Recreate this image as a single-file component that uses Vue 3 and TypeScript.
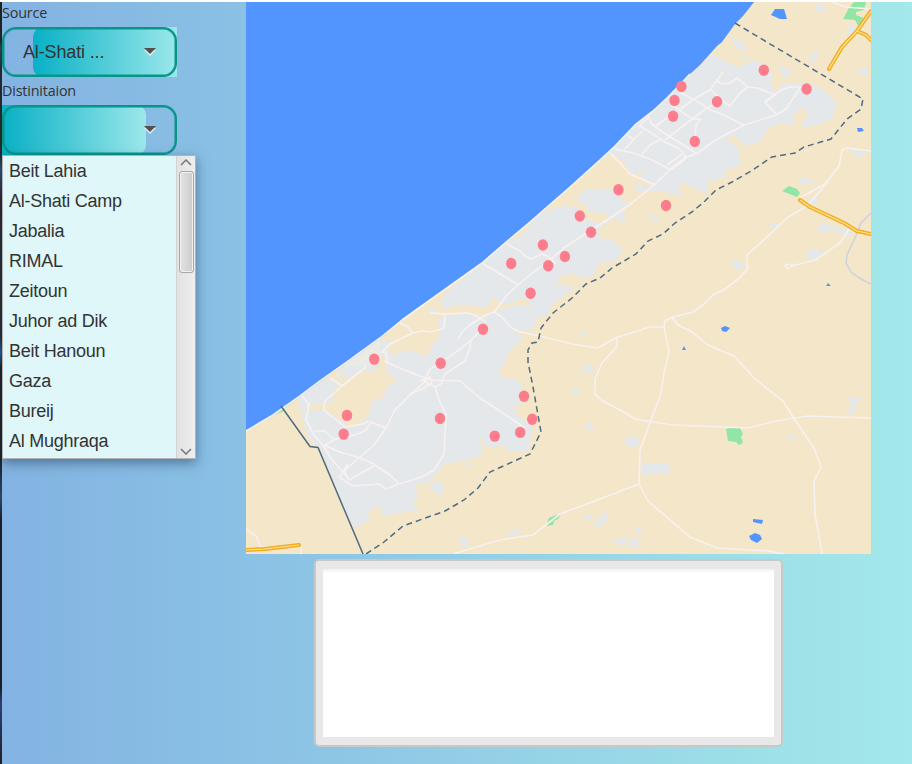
<script setup lang="ts">
import { ref } from 'vue'

interface Point {
  x: number
  y: number
}

const source = ref('Al-Shati ...')
const places: string[] = [
  'Beit Lahia',
  'Al-Shati Camp',
  'Jabalia',
  'RIMAL',
  'Zeitoun',
  'Juhor ad Dik',
  'Beit Hanoun',
  'Gaza',
  'Bureij',
  'Al Mughraqa',
]

const cities: Point[] = [
  { x: 763.8, y: 70.3 }, { x: 806.6, y: 89 }, { x: 681.4, y: 86.5 }, { x: 674.5, y: 100.5 },
  { x: 673.1, y: 116.3 }, { x: 717, y: 101.7 }, { x: 694.8, y: 141.5 }, { x: 618.5, y: 189.7 },
  { x: 666, y: 205.5 }, { x: 579.8, y: 216 }, { x: 591, y: 232.2 }, { x: 542.9, y: 245 },
  { x: 564.9, y: 256.5 }, { x: 548.2, y: 265.7 }, { x: 511.2, y: 263.5 }, { x: 530.6, y: 293.2 },
  { x: 483, y: 329.3 }, { x: 440.7, y: 363.2 }, { x: 374.2, y: 359.1 }, { x: 347, y: 415.4 },
  { x: 343.7, y: 434.1 }, { x: 440, y: 418.5 }, { x: 524, y: 396.2 }, { x: 532.2, y: 419.2 },
  { x: 520.2, y: 432.4 }, { x: 494.7, y: 436.1 },
]

const urban: string[] = [
  '713,54 727,62 740,68 747,63 760,61 772,72 770,83 777,92 783,83 800,83 817,86 827,93 837,103 833,118 817,125 800,128 804,121 808,115 803,107 795,112 793,125 780,123 768,128 760,142 745,146 733,135 726,138 739,149 741,165 725,170 725,177 708,182 707,194 700,191 683,182 678,190 685,197 660,191 637,192 636,183 650,187 655,184 640,177 643,172 632,175 622,160 610,153 615,146 635,125 650,113 668,97 690,74',
  '583,190 613,190 621,199 630,204 610,218 605,213 588,212 587,205 577,202',
  '482,263 505,244 517,235 516,242 530,225 540,214 563,206 577,207 588,220 600,224 610,218 612,220 597,231 603,240 612,238 616,244 623,249 617,260 598,264 593,276 580,278 575,274 562,275 555,284 575,287 550,307 549,314 536,318 533,330 513,331 502,315 493,312 507,307 517,305 529,305 534,315 529,301 520,298 513,303 502,303 493,297 488,307 455,305 445,310 440,303 444,295',
  '380,342 393,340 388,348 390,355 407,350 427,356 432,345 440,337 438,322 442,317 467,313 482,317 493,313 502,317 513,330 523,338 508,353 505,363 498,372 507,380 513,377 522,385 523,402 514,408 517,415 533,427 528,451 508,451 502,445 488,448 479,436 483,452 475,458 445,464 433,478 427,484 416,483 417,498 413,504 420,510 400,513 383,516 380,506 368,512 370,520 355,528 348,518 320,448 308,437 300,410 299,398 320,382 330,378 342,383 347,376 335,377 347,364 375,365 378,353',
  '430,307 440,312 434,315 430,313',
  '614,216 622,210 628,220 617,222',
  '645,213 660,218 656,223', '730,38 740,40 748,51 738,49', '740,55 751,58 745,61',
  '779,64 792,72 784,80', '808,60 818,48 816,63', '855,71 867,67 867,76',
  '817,4 826,5 823,12 816,11', '848,25 858,27 848,36', '850,150 868,152 858,158',
  '801,177 814,181 813,184 799,183', '807,200 817,194 817,203 808,203',
  '768,223 780,224 773,229', '731,263 738,260 744,266 737,271', '807,249 824,251 815,260 806,257',
  '815,228 824,225 822,221 830,226 838,226 824,233', '830,230 850,228 852,237 837,233',
  '847,397 861,398 855,408 852,415 846,411 852,406', '786,434 796,437 793,441',
  '623,443 632,435 639,440 637,449', '641,464 669,463 669,473 641,475',
  '600,516 608,512 607,521 599,518', '595,522 607,523 597,527',
  '610,542 625,536 625,546', '627,543 634,537 641,543 633,548', '636,525 643,531 635,536',
  '583,366 587,363 595,370 583,374', '569,389 581,389 576,397', '584,428 590,421 594,431',
  '578,337 585,331 588,335', '464,461 472,465 469,468', '429,485 440,480 445,490 439,496',
  '458,538 466,537 470,543 463,548', '508,532 520,528 521,532 511,537',
  '582,518 593,513 590,521', '593,526 597,518 607,523',
]

const roads: string[] = [
  'M246 431 273 415 300 396 320 381 347 362 380 338 402 320 430 300 482 263 505 243 530 222 570 187 600 160 615 146 635 125 653 111 668 97 690 74',
  'M458 339 462 332 470 325 482 317 495 311 507 295 518 285 531 274 550 260 565 247 582 236 610 218 632 203 655 184 675 165 687 157 698 153 714 141 744 125 776 115 786 109 800 88',
  'M648 116 652 124 661 131 680 143 697 154',
  'M615 149 637 154 650 159 671 170 684 160 685 155 678 148 665 142 656 136 640 126',
  'M627 135 633 139M625 149 636 137 643 131M648 118 638 127',
  'M642 154 650 145 661 139M667 165 682 154M656 126 676 111M665 140 692 119 707 108 720 102',
  'M678 91 700 103 710 110 724 115 744 125M672 105 692 119 701 119 696 125 695 141M679 110 694 99 710 90 723 72',
  'M717 81 722 84 730 83 737 78 741 81 748 87 740 93 730 106 720 99 711 90',
  'M748 87 758 88 775 95 765 102 777 115M765 102 781 90 790 87 801 87',
  'M610 153 620 163 630 174 642 179 655 185',
  'M505 243 520 251 525 256 531 259 542 254 549 257 556 264M482 263 502 275 518 285',
  'M430 313 445 314 467 313 475 315 486 322M493 312 501 316 512 328 520 332 540 336 572 344 598 348 615 338 650 327 664 327M445 314 444 328 438 330 430 332 423 331 413 333 390 344 382 352',
  'M400 323 408 327 413 333M381 352 386 352 387 362M384 361 402 369 420 376 431 380 460 381 480 398 503 413 525 428',
  'M482 329 471 340 470 348 465 361 445 374 441 384 435 387 424 381 430 369 440 363 459 350 471 340',
  'M435 387 439 400 446 415 444 454 434 470 422 477 399 484 386 489 379 484 353 486 339 477 346 469 374 445 386 428 395 410 412 393 428 379',
  'M324 445 340 452 360 458 370 462 390 475 399 484M374 466 349 480 344 470 348 464',
  'M302 396 309 404 306 420 314 435 323 445 330 457 348 478',
  'M323 446 336 439 358 434 366 430 371 422 386 428M366 367 342 386 324 402 324 410 345 427 363 424 369 421M330 378 343 386M314 431 324 431 334 439',
  'M420 381 430 377 432 382 424 388 411 394',
  'M829 180 820 191 807 206 788 217 765 239 747 255 747 270 737 280 725 289 713 295 704 304 693 312 673 317 665 321 664 327 669 352 664 373 661 394 651 420 640 450 639 484 648 501 690 537 717 548 768 551 784 554',
  'M800 198 825 184 839 166 842 150 847 148 871 151',
  'M849 229 840 243 815 260 800 264 793 265 788 269 785 265 790 264 793 267',
  'M672 317 678 325 692 332 708 345 734 356 755 379 783 401 799 426 814 448 821 467 814 481 815 514 822 554',
  'M617 338 617 346 602 363 595 379 595 394 601 400 620 410 635 419 647 421 673 425 748 428 776 421 808 416 835 417 871 418',
  'M453 554 500 540 533 535 560 514 600 499 639 484',
  'M246 529 256 536 261 548M301 546 301 554M832 2 845 7 871 9',
]

const highways: string[] = [
  'M829 69 842 47 857 31 871 11M857 31 866 35 871 40',
  'M800 200 810 207 844 223 857 231 871 234',
  'M246 550 265 549 299 545',
]
</script>

<template>
  <div class="app">
    <div class="edge"></div>
    <aside class="sidebar">
      <label class="label">Source</label>
      <div class="combo combo-source">
        <span class="value">{{ source }}</span>
        <svg class="arrow" viewBox="0 0 12 8"><path d="M0 2H12L6 8Z" fill="#e4eeee" /><path d="M0 0H12L6 6Z" fill="#53504f" /></svg>
      </div>
      <label class="label">Distinitaion</label>
      <div class="combo combo-target">
        <svg class="arrow" viewBox="0 0 12 8"><path d="M0 2H12L6 8Z" fill="#e4eeee" /><path d="M0 0H12L6 6Z" fill="#53504f" /></svg>
        <div class="popup">
          <ul class="list">
            <li v-for="place in places" :key="place">{{ place }}</li>
          </ul>
          <div class="scrollbar">
            <svg class="chevron" viewBox="0 0 12 7"><path d="M1 6 6 1 11 6" /></svg>
            <div class="thumb"></div>
            <svg class="chevron bottom" viewBox="0 0 12 7"><path d="M1 1 6 6 11 1" /></svg>
          </div>
        </div>
      </div>
    </aside>
    <main class="content">
      <svg class="map" viewBox="246 2 625 552">
        <rect x="246" y="2" width="625" height="552" fill="#f3e6c9" />
        <polygon v-for="(shape, i) in urban" :key="'u' + i" :points="shape" fill="#e4e8eb" />
        <path d="M347 363 380 339V350L378 363 366 366H343Z" fill="#e9ebe4" />
        <path d="M340 383 352 376 363 370 375 373 378 363 383 353 386 362 387 373 398 380 387 387 383 398 373 400 368 417 362 422 350 427 337 418 325 410 318 410 308 411 312 404 323 403 335 402 332 391Z" fill="#f3e6c9" />
        <path d="M246 2V431L273 416 300 397 320 382 347 363 380 339 402 320 416 309 430 300 444 290 482 263 505 243 530 222 570 187 600 160 615 146 635 125 653 111 668 97 690 74 700 65 717 46 722 42 735 24 743 16 754 2Z" fill="#5295ff" />
        <g fill="#5295ff">
          <path d="M771 15 775 9 784 9 787 19 780 19Z" />
          <path d="M857 128 862 128 864 131 858 132Z" />
          <path d="M721 328 725 326 730 328 726 332 722 331Z" />
          <path d="M828 283 831 286 826 286ZM684 346 686 350 682 350Z" />
          <path d="M753 519 763 520 762 524 753 522Z" />
          <path d="M749 536 755 533 760 535 762 539 757 543 751 540Z" />
        </g>
        <g fill="#92e6a5">
          <path d="M854 2H866L864 10 856 12 856 15 864 18 861 27 857 24 855 20 843 19 849 8Z" />
          <path d="M782 191 789 186 797 189 800 193 797 197Z" />
          <path d="M726 429 729 428 740 428 743 434 741 437 743 443 739 445 736 442 728 441Z" />
          <path d="M547 523 549 518 556 515 561 514 558 519 554 521 553 525 547 526Z" />
          <path d="M272 416 282 409 284 411Z" />
        </g>
        <g class="roads">
          <path v-for="(road, i) in roads" :key="'r' + i" :d="road" />
        </g>
        <path d="M871 213 861 223 855 238 847 255 846 263 851 272 861 279 871 284" class="rail" />
        <g class="highway">
          <path v-for="(road, i) in highways" :key="'h' + i" :d="road" />
        </g>
        <g class="highway-mid">
          <path v-for="(road, i) in highways" :key="'m' + i" :d="road" />
        </g>
        <path class="border" d="M281 406 310 446.5 318 447.5 363 554" />
        <path class="border dashed" d="M735 23 760 38 863 99 861 109 847 119 831 139 804 147 795 153 772 157 751 171 732 182 716 190 705 201 692 212 675 223 663 234 648 241 636 254 612 268 600 278 586 284 572 298 553 313 541 328 538 342 532 343 528 350 528 362 533 387 541 432 530 454 490 472 478 488 464 500 445 511 403 526 384 542 366 554" />
        <ellipse v-for="(city, i) in cities" :key="'c' + i" :cx="city.x" :cy="city.y" rx="5.2" ry="5.7" fill="#fd7d8d" />
      </svg>
      <div class="output"></div>
    </main>
  </div>
</template>

<style>
body {
  margin: 0;
}
</style>

<style scoped>
.app {
  display: flex;
  box-sizing: border-box;
  width: 912px;
  height: 764px;
  border-top: 2px solid #fff;
  overflow: hidden;
  background: linear-gradient(to right, #83b3e2 0%, #8cc4e5 33%, #9ee1e8 85%, #a3e8ea 100%);
  font-family: "Liberation Sans", Arial, sans-serif;
  color: #333;
}
.edge {
  width: 2px;
  background: linear-gradient(#202225 0 5%, #264158 6%, #25282c 9% 20%, #28527a 22%, #302027 26%, #252b31 31% 44%, #285a94 46%, #1d2024 48% 60%, #2b4769 65%, #1e1e27 68% 90%, #303e75 92%, #202026);
}
.sidebar {
  width: 244px;
}
.label {
  display: block;
  height: 25px;
  line-height: 21px;
  font-family: "Open Sans", "Noto Sans", sans-serif;
  font-size: 14.4px;
  letter-spacing: -0.2px;
}
.combo {
  position: relative;
  display: flex;
  align-items: center;
  justify-content: space-between;
  box-sizing: border-box;
  width: 175px;
  height: 50px;
  padding: 0 21px;
}
.combo::before {
  content: "";
  position: absolute;
  inset: 0;
  background: linear-gradient(to right, #08b0c6, #9be8eb);
}
.combo-source::before {
  left: 31px;
  border-radius: 10px 0 0 10px;
}
.combo-target::before {
  right: 31px;
  border-radius: 0 10px 10px 0;
}
.combo::after {
  content: "";
  position: absolute;
  inset: 0;
  border: 2px solid #079588;
  border-radius: 14px;
  box-shadow: inset 0 0 0 0.5px #079588;
}
.combo + .label {
  height: 28px;
  line-height: 27px;
}
.value {
  position: relative;
  font-size: 18px;
  letter-spacing: -0.15px;
}
.arrow {
  position: relative;
  width: 12px;
  height: 8px;
  margin-left: auto;
}
.popup {
  position: absolute;
  z-index: 2;
  top: 50px;
  left: 0;
  display: flex;
  box-sizing: border-box;
  width: 194px;
  height: 304px;
  border: 1px solid #b3b3b3;
  background: #dff7f9;
  box-shadow: 0 4px 11px rgba(20, 50, 80, 0.5);
}
.list {
  flex: 1;
  margin: 0;
  padding: 0 0 0 6px;
  list-style: none;
  font-size: 18px;
  line-height: 30px;
  letter-spacing: -0.25px;
}
.scrollbar {
  display: flex;
  flex-direction: column;
  align-items: center;
  box-sizing: border-box;
  width: 19px;
  padding: 3px 0;
  border-left: 1px solid #d0d4d4;
  background: linear-gradient(to right, #e2e2e2, #eee);
}
.chevron {
  width: 12px;
  height: 7px;
  fill: none;
  stroke: #777;
  stroke-width: 1.5;
}
.thumb {
  box-sizing: border-box;
  width: 15px;
  height: 102px;
  margin-top: 5px;
  border: 1px solid #a7a7a7;
  border-radius: 3px;
  background: linear-gradient(to right, #e4e4e4, #cbcbcb);
  box-shadow: inset 0 0 0 1px #f1f1f1;
}
.bottom {
  margin-top: auto;
}
.content {
  width: 625px;
}
.map {
  display: block;
  width: 625px;
  height: 552px;
}
.roads {
  fill: none;
  stroke: #f8f1f0;
  stroke-width: 1.6;
  stroke-linejoin: round;
}
.rail {
  fill: none;
  stroke: #ccd2dd;
  stroke-width: 1.5;
}
.highway {
  fill: none;
  stroke: #f2ad20;
  stroke-width: 4;
  stroke-linecap: round;
}
.highway-mid {
  fill: none;
  stroke: #ffe49a;
  stroke-width: 1.2;
}
.border {
  fill: none;
  stroke: #526b83;
  stroke-width: 1.5;
}
.dashed {
  stroke-dasharray: 6 4;
}
.output {
  box-sizing: border-box;
  width: 469px;
  height: 188px;
  margin: 5px 0 0 68px;
  border: 2px solid #c7c9c9;
  border-radius: 5px;
  background: linear-gradient(#f1f1f1, #fff 4px) 7px 8px / 451px 168px no-repeat, #e8e8e8;
}
</style>
